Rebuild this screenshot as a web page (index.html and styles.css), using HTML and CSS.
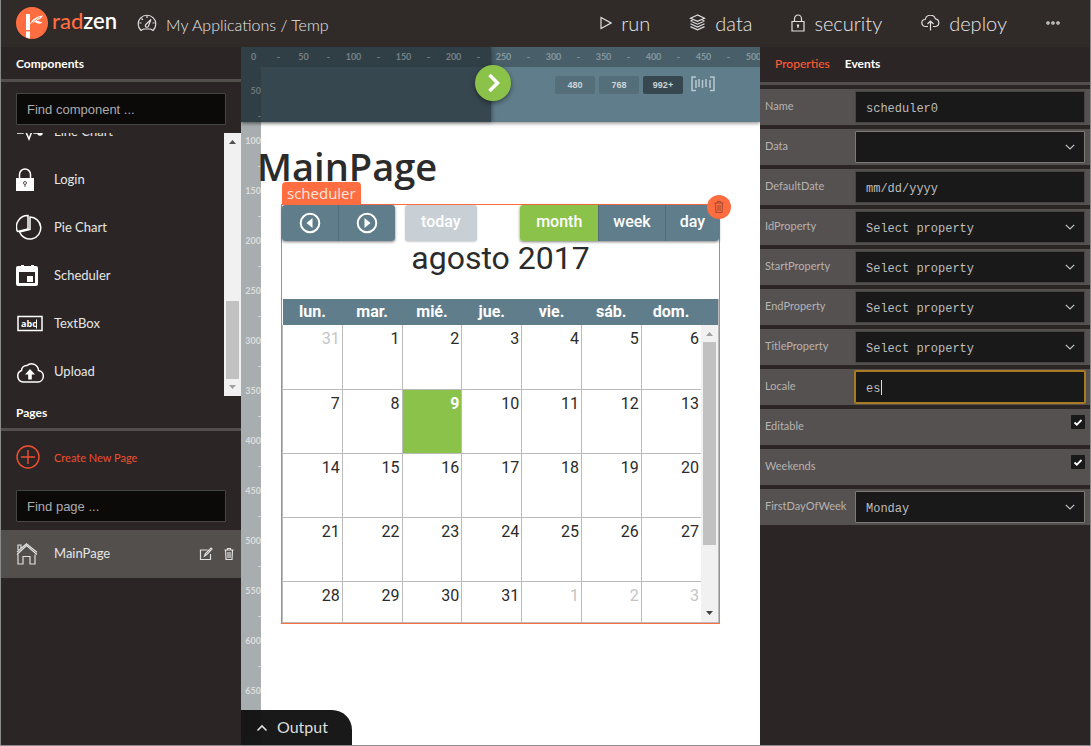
FILE: index.html
```html
<!DOCTYPE html>
<html lang="en">
<head>
<meta charset="utf-8">
<title>Radzen - MainPage</title>
<link rel="stylesheet" href="styles.css">
</head>
<body>
<div class="app">
  <header class="topbar">
    <a class="brand" href="#">
      <svg class="brand-mark" viewBox="0 0 32 32" width="32" height="32"><circle cx="16" cy="16" r="16" fill="#ff6d41"/><path d="M10 7h4v16h-4zM10 24.500h4v7l-4-1z" fill="#fff"/><path d="M14 17C16 12.500 20 9.500 27 8.500c-1.500 3-4 4.200-6.500 5l6 2c-2 1.800-5 1.300-7.500-.5z" fill="#fff"/><path d="M15 16.500l9-6.500" stroke="#ff6d41" stroke-width=".8"/></svg>
      <span class="brand-name"><span class="brand-accent">rad</span>zen</span>
    </a>
    <a class="crumbs" href="#">
      <svg class="line-icon" viewBox="0 0 20 18" width="20" height="18"><path d="M4 16.500a8.800 8.800 0 1 1 12 0l-2.500-1.500h-7zM10 2v2M2.500 9h2M15.500 9h2M4.500 4.500l1.400 1.400M8.800 10.500L14 5.500l-2.500 6.300a1.600 1.600 0 1 1-2.700-1.300z"/></svg>
      <span>My Applications / Temp</span>
    </a>
    <nav class="actions">
      <a href="#"><svg class="line-icon" viewBox="0 0 12 14" width="12" height="14"><path d="M1 1.500v11L11 7z"/></svg>run</a>
      <a href="#"><svg class="line-icon" viewBox="0 0 17 17" width="17" height="17"><path d="M8.500 1L1.500 4.200l7 3.200 7-3.200zM1.500 7l7 3.200 7-3.200M1.500 9.800l7 3.200 7-3.200M1.500 12.600l7 3.200 7-3.200M3.500 6.200l-2 .8M13.500 6.200l2 .8"/></svg>data</a>
      <a href="#"><svg class="line-icon" viewBox="0 0 14 18" width="14" height="18"><path d="M1 7.500h12v9.500H1zM3.500 7.500V4.800a3.500 3.800 0 0 1 7 0v2.700M7 11v3M6.500 11h1v1h-1z"/></svg>security</a>
      <a href="#"><svg class="line-icon" viewBox="0 0 19 16" width="19" height="16"><path d="M7 11.500H4.500a3.500 3.500 0 0 1-.3-7 5.300 5.300 0 0 1 10.200-.7 3.900 3.900 0 0 1 .2 7.700H12M9.500 15.500V6.500M6.500 9l3-3 3 3"/></svg>deploy</a>
      <button class="more" type="button" aria-label="More"><svg class="line-icon" viewBox="0 0 14 4" width="14" height="4"><circle cx="2" cy="2" r="1.200"/><circle cx="7" cy="2" r="1.200"/><circle cx="12" cy="2" r="1.200"/></svg></button>
    </nav>
  </header>

  <main class="workspace">
    <aside class="left">
      <h2 class="panel-title">Components</h2>
      <div class="search"><input type="text" placeholder="Find component ..." aria-label="Find component"></div>
      <div class="component-list">
        <ul class="items">
          <li><svg class="solid-line" viewBox="0 0 28 28" width="28" height="28"><path d="M1 15h6l2-3 4 9 3-8 2 2h6"/><circle cx="24" cy="15" r="2" fill="#fff"/></svg><span>Line Chart</span></li>
          <li><svg viewBox="0 0 28 28" width="28" height="28"><path d="M3.500 12V8.500a5.500 5.500 0 0 1 11 0V12" fill="none" stroke="#fff" stroke-width="1.500"/><path d="M0 12h18v13H0z" fill="#fff"/><circle cx="9" cy="17" r="1.500" fill="none" stroke="#555"/><path d="M9 18.500V21" stroke="#555"/></svg><span>Login</span></li>
          <li><svg class="solid-line" viewBox="0 0 28 28" width="28" height="28"><path d="M12 1.500A11.300 11.300 0 0 0 1.500 17.500L12 15zM14 3a11 11 0 1 1-10.500 15L14 15.500z"/></svg><span>Pie Chart</span></li>
          <li><svg viewBox="0 0 28 28" width="28" height="28"><path fill-rule="evenodd" d="M3 4h2V3h3v1h7V3h3v1h2a2 2 0 0 1 2 2v16a2 2 0 0 1-2 2H2a2 2 0 0 1-2-2V6a2 2 0 0 1 2-2zM3 10v11h16V10zM11 14h6v6h-6z" fill="#fff"/></svg><span>Scheduler</span></li>
          <li><svg viewBox="0 0 28 28" width="28" height="28"><path d="M2 6.500h24v14H2z" fill="none" stroke="#fff" stroke-width="1.500"/><text x="5" y="17" class="icon-text">abc</text><path d="M20.500 9.500v9" stroke="#fff"/></svg><span>TextBox</span></li>
          <li><svg class="solid-line" viewBox="0 0 28 28" width="28" height="28"><path d="M7 24a6 6 0 0 1-1.500-11.500A5 5 0 0 1 11 7.500a7 7 0 0 1 11.500 5A5.800 5.800 0 0 1 22 24z"/><path d="M14 11l5 5.500h-3.200v5h-3.600v-5H9z" fill="#fff" stroke="none"/></svg><span>Upload</span></li>
        </ul>
        <div class="scrollbar">
          <svg viewBox="0 0 17 17" width="17" height="17"><path d="M5 11l3.500-4L12 11z" fill="#505050"/></svg>
          <div class="track low"><div class="thumb"></div></div>
          <svg viewBox="0 0 17 17" width="17" height="17"><path d="M5 6l3.500 4L12 6z" fill="#a0a0a0"/></svg>
        </div>
      </div>
      <h2 class="panel-title">Pages</h2>
      <button class="create" type="button"><svg viewBox="0 0 24 24" width="24" height="24"><path d="M12 5v14M5 12h14" /><circle cx="12" cy="12" r="11"/></svg>Create New Page</button>
      <div class="search"><input type="text" placeholder="Find page ..." aria-label="Find page"></div>
      <div class="page-row">
        <svg class="line-icon" viewBox="0 0 22 22" width="22" height="22"><path d="M1 11.500L10.500 2.500 21 11.500M1 9L10.500.8 21 9.200M2 7V2h3v3M2 11.500V21h5v-7.500h7V21h5v-9.500"/></svg>
        <span class="page-name">MainPage</span>
        <button class="tool" type="button" aria-label="Edit page"><svg class="line-icon" viewBox="0 0 14 14" width="14" height="14"><path d="M8.500 3H1.500v9.500h10V7M5.500 9l1-2.500L12 1l1 1-5.500 5.800z"/></svg></button>
        <button class="tool" type="button" aria-label="Delete page"><svg class="line-icon" viewBox="0 0 10 14" width="10" height="14"><path d="M.5 3h9M3.500 3V1.500h3V3M1.500 3l.5 9.500h6L8.500 3M4 5v6M6 5v6"/></svg></button>
      </div>
    </aside>

    <section class="canvas">
      <div class="preview-bar">
        <div class="preview-nav"></div>
        <div class="widths">
          <button type="button">480</button>
          <button type="button">768</button>
          <button class="current" type="button">992+</button>
          <svg viewBox="0 0 24 16" width="24" height="16"><path d="M5 1H1v13.500h4M19 1h4v13.500h-4" fill="none" stroke="#b8c6cd" stroke-width="1.500"/><path d="M5 4v8M8 3v8M11.500 4v8M15 3v8M19 4v8" stroke="#b8c6cd" stroke-width="1.500"/></svg>
        </div>
      </div>

      <div class="page-body">
        <h1 class="page-heading">MainPage</h1>
        <div class="selected">
          <span class="selected-tag">scheduler</span>
          <button class="selected-delete" type="button" aria-label="Delete scheduler"><svg viewBox="0 0 10 14" width="10" height="14"><path d="M.5 3h9M3.500 3V1.500h3V3M1.500 3l.5 9.500h6L8.500 3M4 5v6M6 5v6"/></svg></button>
          <div class="cal-tools">
            <div class="group steps">
              <button type="button" aria-label="Previous"><svg viewBox="0 0 22 22" width="22" height="22"><circle cx="11" cy="11" r="9.300" fill="none" stroke="#fff" stroke-width="2"/><path d="M13.500 6v10L7.500 11z" fill="#fff"/></svg></button>
              <button type="button" aria-label="Next"><svg viewBox="0 0 22 22" width="22" height="22"><circle cx="11" cy="11" r="9.300" fill="none" stroke="#fff" stroke-width="2"/><path d="M8.500 6v10l6-5z" fill="#fff"/></svg></button>
            </div>
            <button class="today" type="button">today</button>
            <div class="group views">
              <button class="current" type="button">month</button>
              <button type="button">week</button>
              <button type="button">day</button>
            </div>
          </div>
          <h2 class="cal-title">agosto 2017</h2>
          <div class="cal-grid">
            <table class="cal">
              <thead><tr><th>lun.</th><th>mar.</th><th>mié.</th><th>jue.</th><th>vie.</th><th>sáb.</th><th>dom.</th></tr></thead>
              <tbody>
                <tr><td class="other">31</td><td>1</td><td>2</td><td>3</td><td>4</td><td>5</td><td>6</td></tr>
                <tr><td>7</td><td>8</td><td class="now">9</td><td>10</td><td>11</td><td>12</td><td>13</td></tr>
                <tr><td>14</td><td>15</td><td>16</td><td>17</td><td>18</td><td>19</td><td>20</td></tr>
                <tr><td>21</td><td>22</td><td>23</td><td>24</td><td>25</td><td>26</td><td>27</td></tr>
                <tr><td>28</td><td>29</td><td>30</td><td>31</td><td class="other">1</td><td class="other">2</td><td class="other">3</td></tr>
              </tbody>
            </table>
            <div class="cal-side">
              <div class="cal-corner"></div>
              <div class="scrollbar">
                <svg viewBox="0 0 17 17" width="17" height="17"><path d="M5 11l3.500-4L12 11z" fill="#a0a0a0"/></svg>
                <div class="track"><div class="thumb tall"></div></div>
                <svg viewBox="0 0 17 17" width="17" height="17"><path d="M5 6l3.500 4L12 6z" fill="#404040"/></svg>
              </div>
            </div>
          </div>
        </div>
      </div>

      <div class="ruler ruler-x"><span>0</span><span>-</span><span>50</span><span>-</span><span>100</span><span>-</span><span>150</span><span>-</span><span>200</span><span>-</span><span>250</span><span>-</span><span>300</span><span>-</span><span>350</span><span>-</span><span>400</span><span>-</span><span>450</span><span>-</span><span>500</span></div>
      <div class="ruler ruler-y"><span>50</span><span>-</span><span>100</span><span>-</span><span>150</span><span>-</span><span>200</span><span>-</span><span>250</span><span>-</span><span>300</span><span>-</span><span>350</span><span>-</span><span>400</span><span>-</span><span>450</span><span>-</span><span>500</span><span>-</span><span>550</span><span>-</span><span>600</span><span>-</span><span>650</span><span>-</span><span>700</span></div>
      <button class="nav-toggle" type="button" aria-label="Toggle navigation"><svg viewBox="0 0 20 20" width="20" height="20"><path d="M6.500 2l8 8-8 8" fill="none" stroke="#fff" stroke-width="3.500"/></svg></button>
      <button class="output" type="button"><svg class="line-icon" viewBox="0 0 12 8" width="12" height="8"><path d="M1.500 6.500L6 2l4.500 4.500" stroke-width="1.600"/></svg><span>Output</span></button>
    </section>

    <aside class="right">
      <nav class="tabs"><a class="current" href="#">Properties</a><a href="#">Events</a></nav>
      <form class="props">
        <div class="prop"><label for="p-name">Name</label><input id="p-name" type="text" value="scheduler0"></div>
        <div class="prop"><label for="p-data">Data</label><div class="pick outlined"><select id="p-data"><option></option></select><svg viewBox="0 0 10 6" width="10" height="6"><path d="M.8.8L5 5 9.200.8"/></svg></div></div>
        <div class="prop"><label for="p-date">DefaultDate</label><input id="p-date" type="text" placeholder="mm/dd/yyyy"></div>
        <div class="prop"><label for="p-id">IdProperty</label><div class="pick"><select id="p-id"><option>Select property</option></select><svg viewBox="0 0 10 6" width="10" height="6"><path d="M.8.8L5 5 9.200.8"/></svg></div></div>
        <div class="prop"><label for="p-start">StartProperty</label><div class="pick"><select id="p-start"><option>Select property</option></select><svg viewBox="0 0 10 6" width="10" height="6"><path d="M.8.8L5 5 9.200.8"/></svg></div></div>
        <div class="prop"><label for="p-end">EndProperty</label><div class="pick"><select id="p-end"><option>Select property</option></select><svg viewBox="0 0 10 6" width="10" height="6"><path d="M.8.8L5 5 9.200.8"/></svg></div></div>
        <div class="prop"><label for="p-title">TitleProperty</label><div class="pick"><select id="p-title"><option>Select property</option></select><svg viewBox="0 0 10 6" width="10" height="6"><path d="M.8.8L5 5 9.200.8"/></svg></div></div>
        <div class="prop"><label for="p-locale">Locale</label><div class="pick active"><input id="p-locale" type="text" value="es"><span class="caret"></span></div></div>
        <div class="prop"><label for="p-edit">Editable</label><div class="check"><input id="p-edit" type="checkbox" checked><svg viewBox="0 0 14 14" width="14" height="14"><path d="M3.500 7.500l2.300 2.200L10.500 5"/></svg></div></div>
        <div class="prop"><label for="p-week">Weekends</label><div class="check"><input id="p-week" type="checkbox" checked><svg viewBox="0 0 14 14" width="14" height="14"><path d="M3.500 7.500l2.300 2.200L10.500 5"/></svg></div></div>
        <div class="prop"><label for="p-first">FirstDayOfWeek</label><div class="pick outlined"><select id="p-first"><option>Monday</option></select><svg viewBox="0 0 10 6" width="10" height="6"><path d="M.8.8L5 5 9.200.8"/></svg></div></div>
      </form>
    </aside>
  </main>
</div>
</body>
</html>
```
FILE: styles.css
```css
* { box-sizing: border-box; }
body { margin: 0; font-family: Lato, sans-serif; font-size: 13px; color: #e6e6e6; }
a { color: inherit; text-decoration: none; }
button { margin: 0; padding: 0; border: 0; background: none; font: inherit; color: inherit; }
h1, h2, ul { margin: 0; padding: 0; }
svg { display: block; flex: none; }
.line-icon { fill: none; stroke: #e0e0e0; stroke-width: 1.2; }
.solid-line { fill: none; stroke: #fff; stroke-width: 1.5; }
.icon-text { font: bold 9px "Open Sans", sans-serif; fill: #fff; }

.app { display: flex; flex-direction: column; height: 100vh; border: 1px solid #8a8a8a; border-top: 0; background: #2b2625; overflow: hidden; }

/* Top bar */
.topbar { display: flex; align-items: center; height: 47px; flex: none; padding: 0 30px 2px 15px; background: #302a29; }
.brand { display: flex; align-items: center; gap: 4px; }
.brand-name { font-size: 22px; font-weight: 600; color: #fff; line-height: 24px; padding-bottom: 4px; }
.brand-accent { color: #ff6d41; font-weight: 500; }
.crumbs { display: flex; align-items: center; gap: 9px; margin-left: 20px; font-size: 16px; font-weight: 300; }
.crumbs span { padding-top: 3px; }
.actions { display: flex; align-items: center; gap: 39px; margin-left: auto; font-size: 20px; font-weight: 300; }
.actions a { display: flex; align-items: center; gap: 9px; }

.workspace { display: flex; flex: 1; min-height: 0; }

/* Left panel */
.left { width: 240px; flex: none; }
.panel-title { height: 35px; padding: 0 15px; border-bottom: 3px solid #534f4d; font-size: 12px; line-height: 33px; font-weight: 700; color: #fff; }
.search { padding: 11px 15px 8px; }
.search input { display: block; width: 100%; height: 32px; padding: 0 10px; border: 1px solid #454545; border-radius: 1px; background: #0b0a09; font: 13px "Liberation Sans", sans-serif; color: #b5b5b5; }
.search input::placeholder { color: #ababab; }
.component-list { display: flex; height: 263px; }
.items { display: flex; flex-direction: column; justify-content: flex-end; flex: 1; overflow: hidden; padding-left: 15px; list-style: none; }
.items li { display: flex; align-items: center; gap: 10px; height: 48px; flex: none; font-weight: 400; }
.items span, .page-name { padding-bottom: 3px; }
.scrollbar { display: flex; flex-direction: column; width: 17px; flex: none; background: #f1f1f1; }
.track { display: flex; flex: 1; padding: 0 2px; }
.thumb { width: 13px; height: 78px; background: #c1c1c1; }
.track.low { align-items: flex-end; }
.thumb.tall { height: 77%; }
.create { display: flex; align-items: center; gap: 14px; height: 52px; padding-left: 15px; font-size: 11px; color: #f04e30; }
.create svg { fill: none; stroke: #f04e30; stroke-width: 1.4; }
.create + .search { padding-top: 7px; }
.page-row { display: flex; align-items: center; height: 48px; padding: 0 7px 0 15px; gap: 11px; background: #524f4d; }
.page-name { flex: 1; padding-left: 5px; }

/* Design surface */
.canvas { position: relative; flex: 1; min-width: 0; overflow: hidden; background: #fff; color: #2b2b2b; }
.preview-bar { display: flex; justify-content: space-between; height: 75px; background: #607d8b; box-shadow: 0 1px 4px rgba(0, 0, 0, .5); }
.preview-nav { width: 250px; background: #37474f; box-shadow: 1px 0 4px rgba(0, 0, 0, .4); }
.widths { display: flex; gap: 4px; padding: 29px 45px 0 0; }
.widths button { width: 40px; height: 18px; border-radius: 2px; background: #546e7a; font: bold 9px "Liberation Sans", sans-serif; color: #ccd6da; }
.widths .current { background: #37474f; }
.widths svg { margin-left: 4px; }
.page-body { position: relative; z-index: 1; padding: 17px 40px 0 16px; }
.page-heading { font: 600 38px/54px "Open Sans", "Noto Sans", sans-serif; }
.selected { position: relative; margin: 11px 0 0 24px; border: 1px solid #ff6d41; font-family: Roboto, sans-serif; }
.selected-tag { position: absolute; left: 0; bottom: 100%; height: 23px; padding: 0 5px; border-radius: 4px 4px 0 0; background: #ff6d41; color: #ffe4dc; font: 400 15px/23px "Open Sans", sans-serif; }
.selected-delete { position: absolute; z-index: 1; right: -12px; top: -10px; display: grid; place-items: center; width: 24px; height: 24px; border-radius: 50%; background: #ff6d41; }
.selected-delete svg { fill: none; stroke: #a24a31; }
.cal-tools { display: flex; font-size: 16px; font-weight: 500; line-height: 18px; color: #fff; }
.cal-tools button { display: grid; place-items: center; height: 36px; padding: 0 16px 2px; background: #607d8b; color: #fff; }
.cal-tools .steps button { padding: 0 17px; line-height: 0; }
.cal-tools .views button { padding: 0 14px 2px; }
.cal-tools .views .current { padding: 0 16px 2px; background: #8bc34a; }
.group { display: flex; border-radius: 3px; overflow: hidden; box-shadow: 0 1px 3px rgba(0, 0, 0, .5); }
.group button + button { border-left: 1px solid #536d79; }
.cal-tools .today { margin-left: 10px; border-radius: 3px; background: #c8d0d6; box-shadow: 0 1px 2px rgba(0, 0, 0, .2); }
.views { margin-left: auto; }
.cal-title { height: 58px; font-size: 32px; line-height: 35px; font-weight: 400; text-align: center; }
.cal-grid { display: flex; border: 1px solid #bbb; border-width: 0 1px 1px 0; }
.cal { flex: 1; width: 100%; table-layout: fixed; border-collapse: collapse; font-size: 16px; }
.cal th { height: 26px; padding: 0 0 2px; background: #607d8b; color: #fff; font-weight: 700; }
.cal td { height: 64px; padding: 4px 2px 0 0; border: 1px solid #bbb; text-align: right; vertical-align: top; line-height: 19px; }
.cal td:last-child { border-right: 0; }
.cal tbody tr:first-child td { border-top: 0; }
.cal tbody tr:last-child td { height: 41px; border-bottom: 0; }
.cal .other { color: #c4c4c4; }
.cal .now { background: #8bc34a; color: #fff; font-weight: 700; }
.cal-side { display: flex; flex-direction: column; width: 17px; flex: none; }
.cal-side .scrollbar { flex: 1; }
.cal-corner { height: 26px; background: #607d8b; }

.ruler { position: absolute; display: flex; background: rgba(38, 50, 56, .4); font-size: 9px; font-weight: 700; color: rgba(255, 255, 255, .6); overflow: hidden; }
.ruler span { flex: none; }
.ruler-x { left: 0; right: 0; top: 0; height: 20px; line-height: 19px; color: rgba(255, 255, 255, .35); }
.ruler-x span { width: 25px; text-align: center; }
.ruler-y { left: 0; top: 20px; bottom: 0; width: 20px; flex-direction: column; align-items: flex-end; padding-top: 11px; }
.ruler-y span { height: 25px; line-height: 25px; }
.ruler-y span:nth-child(-n+2) { color: rgba(255, 255, 255, .3); }
.nav-toggle { position: absolute; left: 234px; top: 18px; display: grid; place-items: center; width: 36px; height: 36px; border-radius: 50%; background: #8bc34a; box-shadow: 0 2px 5px rgba(0, 0, 0, .45); }
.output { position: absolute; z-index: 2; left: 0; bottom: 0; display: flex; align-items: center; gap: 9px; height: 35px; padding: 0 24px 0 15px; border-radius: 0 20px 0 0; background: rgba(16, 16, 16, .96); font-size: 16px; font-weight: 400; color: #ddd; }
.output span { padding-bottom: 2px; }

/* Right panel */
.right { width: 330px; flex: none; }
.tabs { display: flex; gap: 15px; height: 38px; padding: 0 15px; border-bottom: 3px solid #534f4d; font-size: 12px; font-weight: 700; line-height: 33px; color: #fff; }
.tabs .current { color: #ff5a36; font-weight: 500; }
.props { display: flex; flex-direction: column; gap: 4px; padding-top: 4px; }
.prop { display: flex; height: 36px; padding: 2px 5px; background: #555150; }
.prop label { width: 90px; flex: none; font-size: 11px; font-weight: 400; line-height: 30px; color: #b5b2b1; }
.prop input[type=text], .pick select { flex: 1; min-width: 0; width: 100%; height: 32px; padding: 4px 10px 0; border: 1px solid #454444; border-radius: 1px; outline: 0; appearance: none; background: #191919; font: 12px "Liberation Mono", monospace; color: #bdbdbd; }
.prop input::placeholder { color: #bdbdbd; }
.pick { position: relative; display: grid; flex: 1; align-items: center; }
.pick select, .pick input, .pick svg { grid-area: 1 / 1; }
.pick svg { justify-self: end; margin-right: 10px; fill: none; stroke: #c5c5c5; stroke-width: 1.2; pointer-events: none; }
.pick.outlined select { border-color: #7d7b7a; }
.prop .active input { border-color: #a87a22; box-shadow: 0 0 0 1px #a87a22; }
.caret { position: absolute; left: 26px; top: 9px; width: 1px; height: 15px; background: #ddd; }
.check { display: grid; margin: 4px 0 0 auto; width: 14px; height: 14px; }
.check input, .check svg { grid-area: 1 / 1; }
.check input { appearance: none; margin: 0; width: 14px; height: 14px; border-radius: 1px; background: #191919; }
.check svg { fill: none; stroke: #fff; stroke-width: 1.8; pointer-events: none; }
```
